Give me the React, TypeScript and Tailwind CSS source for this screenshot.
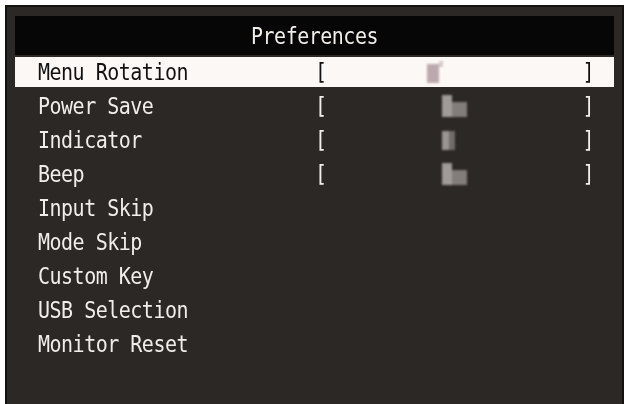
const items = [
  { label: "Menu Rotation", value: "rot" },
  { label: "Power Save", value: "wide" },
  { label: "Indicator", value: "narrow" },
  { label: "Beep", value: "wide" },
  { label: "Input Skip" },
  { label: "Mode Skip" },
  { label: "Custom Key" },
  { label: "USB Selection" },
  { label: "Monitor Reset" },
];

const osd = "font-['DejaVu_Sans_Mono',monospace] text-[20px] tracking-[-0.5px] leading-none";
const tall = "inline-block scale-y-[1.14]";

function Blob({ kind }: { kind: string }) {
  if (kind === "rot") {
    return (
      <div className="flex items-start blur-[1px] ml-[100px]">
        <div className="w-[12px] h-[19px] mt-[3px] bg-[#bca9ad]" />
        <div className="w-[4px] h-[6px] bg-[#d8cacc]" />
      </div>
    );
  }
  if (kind === "narrow") {
    return (
      <div className="flex blur-[1px] ml-[115px]">
        <div className="w-[7px] h-[19px] bg-[#9a9593]" />
        <div className="w-[6px] h-[19px] bg-[#716b69]" />
      </div>
    );
  }
  return (
    <div className="flex blur-[1px] ml-[115px]">
      <div className="w-[10px] h-[22px] bg-[#a09b99]" />
      <div className="w-[15px] h-[15px] mt-[7px] bg-[#827c7a]" />
    </div>
  );
}

export default function App() {
  return (
    <div className="w-[626px] h-[404px] overflow-hidden bg-white">
      <div className="ml-[5px] mt-[5px] w-[619px] h-[410px] border-2 border-[#141211] bg-[#2c2825] px-[8px] pt-[9px]">
        {/* Title bar */}
        <div className={`h-[39px] bg-[#060606] flex items-center justify-center text-[#f1ede9] ${osd}`}>
          <span className={tall}>Preferences</span>
        </div>

        {/* Menu rows */}
        {items.map((item, i) => {
          const selected = i === 0;
          return (
            <div key={item.label} className="h-[34px] py-[2px]">
              <div
                className={`h-full flex items-center pl-[23px] pr-[20px] ${osd} ${
                  selected ? "bg-[#fcf8f5] text-[#111]" : "text-[#f1ede9]"
                }`}
              >
                <span className="w-[277px] shrink-0">
                  <span className={tall}>{item.label}</span>
                </span>
                {item.value && (
                  <>
                    <span className={tall}>[</span>
                    <div className="flex-1 flex items-center">
                      <Blob kind={item.value} />
                    </div>
                    <span className={tall}>]</span>
                  </>
                )}
              </div>
            </div>
          );
        })}
      </div>
    </div>
  );
}
